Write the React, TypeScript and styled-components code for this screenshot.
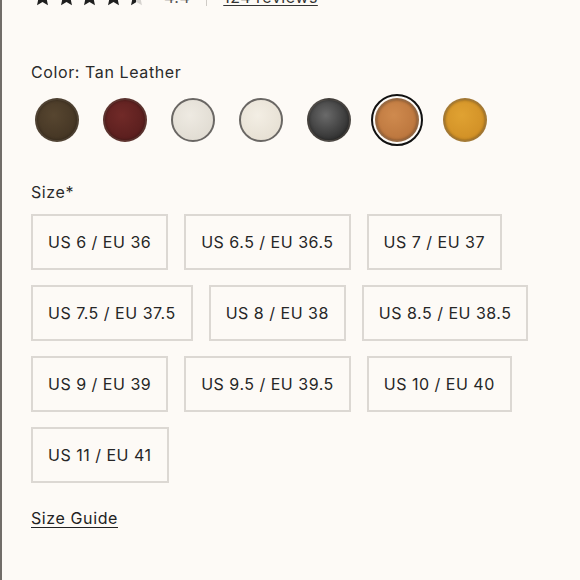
import React from 'react';
import styled, { createGlobalStyle } from 'styled-components';

const Global = createGlobalStyle`
  html, body {
    margin: 0;
    padding: 0;
    background: #fdfaf6;
  }
  body {
    font-family: 'Inter', 'Liberation Sans', sans-serif;
    color: #222;
  }
`;

type Swatch = { name: string; fill: string; shade?: string; ring?: boolean };

const swatches: Swatch[] = [
  { name: 'Dark Brown', fill: '#574630', shade: '#3e3020' },
  { name: 'Burgundy', fill: '#712a28', shade: '#521a1a' },
  { name: 'Bone', fill: '#eeeae2', shade: '#ddd8ce', ring: true },
  { name: 'Cream', fill: '#f3eee4', shade: '#e3dccf', ring: true },
  { name: 'Black', fill: '#6a6a6a', shade: '#1e1e1e' },
  { name: 'Tan Leather', fill: '#cf8a4e', shade: '#b56f38' },
  { name: 'Mustard', fill: '#e0a232', shade: '#cc8a22' },
];

const sizes = [
  ['US 6 / EU 36', 'US 6.5 / EU 36.5', 'US 7 / EU 37'],
  ['US 7.5 / EU 37.5', 'US 8 / EU 38', 'US 8.5 / EU 38.5'],
  ['US 9 / EU 39', 'US 9.5 / EU 39.5', 'US 10 / EU 40'],
  ['US 11 / EU 41'],
];

const selected = 'Tan Leather';

const Star: React.FC<{ fill: number; id: string }> = ({ fill, id }) => (
  <svg width="19" height="18" viewBox="0 0 24 23">
    <defs>
      <linearGradient id={id}>
        <stop offset={`${fill * 100}%`} stopColor="#1f1f1f" />
        <stop offset={`${fill * 100}%`} stopColor="#d6d3cf" />
      </linearGradient>
    </defs>
    <path
      d="M12 0.8l3.3 7.2 7.9.8-5.9 5.3 1.7 7.8L12 17.9l-7 4 1.7-7.8L.8 8.8l7.9-.8z"
      fill={`url(#${id})`}
    />
  </svg>
);

const App: React.FC = () => {
  return (
    <Page>
      <Global />
      <Rating>
        <Stars>
          {[1, 1, 1, 1, 0.45].map((f, i) => (
            <Star key={i} fill={f} id={`star-${i}`} />
          ))}
        </Stars>
        <Score>4.4</Score>
        <Divider />
        <Reviews href="#">124 reviews</Reviews>
      </Rating>

      <Label>Color: {selected}</Label>
      <SwatchRow>
        {swatches.map((s) => (
          <SwatchSlot key={s.name} $active={s.name === selected} title={s.name}>
            <Dot $fill={s.fill} $shade={s.shade || s.fill} $ring={!!s.ring} />
          </SwatchSlot>
        ))}
      </SwatchRow>

      <Label $top={36}>Size*</Label>
      <SizeGrid>
        {sizes.map((row, i) => (
          <SizeRow key={i}>
            {row.map((s) => (
              <SizeButton key={s}>{s}</SizeButton>
            ))}
          </SizeRow>
        ))}
      </SizeGrid>

      <Guide href="#">Size Guide</Guide>
    </Page>
  );
};

const Page = styled.div`
  min-height: 580px;
  box-sizing: border-box;
  border-left: 2px solid #716d69;
  padding-left: 29px;
  overflow: hidden;
`;

const Rating = styled.div`
  display: flex;
  align-items: center;
  height: 20px;
  margin-top: -13px;
`;

const Stars = styled.div`
  display: flex;
  gap: 4.5px;
  margin-left: 2px;
`;

const Score = styled.span`
  margin-left: 18px;
  font-size: 16px;
  color: #555;
  letter-spacing: 0.5px;
`;

const Divider = styled.span`
  width: 1px;
  height: 18px;
  background: #cfcbc6;
  margin: 0 16px;
`;

const Reviews = styled.a`
  font-size: 16px;
  color: #333;
  letter-spacing: 0.5px;
  text-decoration: underline;
  text-underline-offset: 2px;
`;

const Label = styled.div<{ $top?: number }>`
  margin-top: ${(p) => p.$top ?? 55}px;
  font-size: 16px;
  letter-spacing: 0.6px;
  color: #2a2a2a;
  line-height: 20px;
`;

const SwatchRow = styled.div`
  display: flex;
  gap: 16px;
  margin-top: 12px;
`;

const SwatchSlot = styled.div<{ $active: boolean }>`
  width: 52px;
  height: 52px;
  box-sizing: border-box;
  border-radius: 50%;
  display: flex;
  align-items: center;
  justify-content: center;
  border: 2px solid ${(p) => (p.$active ? '#111' : 'transparent')};
`;

const Dot = styled.span<{ $fill: string; $shade: string; $ring: boolean }>`
  width: 44px;
  height: 44px;
  box-sizing: border-box;
  border-radius: 50%;
  background: radial-gradient(circle at 42% 38%, ${(p) => p.$fill} 0%, ${(p) => p.$shade} 100%);
  border: 2px solid ${(p) => (p.$ring ? '#6a6764' : 'rgba(90, 80, 70, 0.4)')};
  box-shadow: ${(p) => (p.$ring ? 'none' : 'inset 0 0 3px rgba(0, 0, 0, 0.35)')};
`;

const SizeGrid = styled.div`
  display: flex;
  flex-direction: column;
  gap: 15px;
  margin-top: 12px;
`;

const SizeRow = styled.div`
  display: flex;
  gap: 16px;
`;

const SizeButton = styled.button`
  height: 56px;
  padding: 0 15px;
  box-sizing: border-box;
  background: transparent;
  border: 2px solid #dcd8d3;
  font-family: 'Inter', 'Liberation Sans', sans-serif;
  font-size: 16px;
  letter-spacing: 0.5px;
  color: #262626;
  cursor: pointer;
`;

const Guide = styled.a`
  display: inline-block;
  margin-top: 25px;
  font-size: 16px;
  letter-spacing: 0.6px;
  color: #222;
  text-decoration: underline;
  text-underline-offset: 3px;
`;

export default App;
